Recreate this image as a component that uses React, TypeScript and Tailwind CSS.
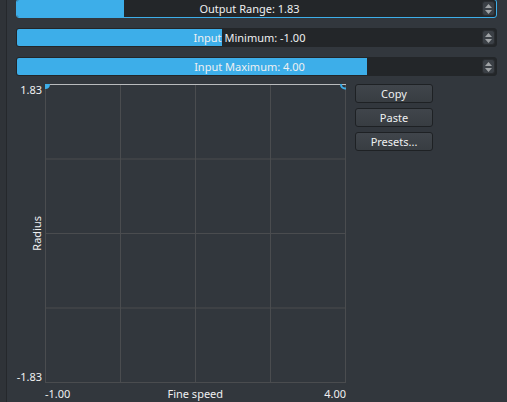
import React from "react";

type SliderProps = { label: string; fill: number; focused?: boolean };

function Spinner() {
  return (
    <div className="my-[1px] mr-[1px] w-[13px] rounded-[3px] border border-[#2a2d31] bg-[#3b4046] flex flex-col items-center justify-center gap-[2px]">
      <svg width="7" height="4" viewBox="0 0 7 4">
        <path d="M0 4 L3.5 0 L7 4 Z" fill="#a0a3a6" />
      </svg>
      <svg width="7" height="4" viewBox="0 0 7 4">
        <path d="M0 0 L3.5 4 L7 0 Z" fill="#a0a3a6" />
      </svg>
    </div>
  );
}

function Slider({ label, fill, focused }: SliderProps) {
  return (
    <div
      className={
        focused
          ? "h-[19px] flex rounded-[3px] border border-[#3daee9] bg-[#232629]"
          : "h-[19px] flex rounded-[3px] border border-[#232629] bg-[#232629]"
      }
    >
      <div className="relative flex-1 overflow-hidden rounded-l-[2px]">
        <div className="absolute inset-y-0 left-0 bg-[#3daee9]" style={{ width: fill }} />
        <div className="relative h-full flex items-center justify-center text-[11px] leading-none text-[#eff0f1]">
          {label}
        </div>
      </div>
      <Spinner />
    </div>
  );
}

function Btn({ children }: { children: React.ReactNode }) {
  return (
    <button className="h-[19px] w-[78px] rounded-[3px] border border-[#1e2124] bg-gradient-to-b from-[#40454b] to-[#383d42] text-[11px] leading-none text-[#eff0f1]">
      {children}
    </button>
  );
}

function Plot() {
  const xs = [0.5, 75.5, 150.5, 225.5, 300.5];
  const ys = [0.5, 75, 149.5, 224, 298.5];
  return (
    <svg width="301" height="299" viewBox="0 0 301 299" className="block">
      <defs>
        <clipPath id="plotclip">
          <rect x="0" y="0" width="301" height="299" />
        </clipPath>
      </defs>
      {xs.map((x) => (
        <line key={"x" + x} x1={x} y1={0} x2={x} y2={299} stroke="#4a4c4f" strokeWidth="1" />
      ))}
      {ys.map((y) => (
        <line key={"y" + y} x1={0} y1={y} x2={301} y2={y} stroke="#4a4c4f" strokeWidth="1" />
      ))}
      <g clipPath="url(#plotclip)">
        <line x1={0} y1={0.5} x2={301} y2={0.5} stroke="#b9bbbd" strokeWidth="1" />
        <circle cx="0.5" cy="0.5" r="4.5" fill="#3daee9" />
        <circle cx="300" cy="0.5" r="4" fill="none" stroke="#3daee9" strokeWidth="2" />
      </g>
    </svg>
  );
}

export default function App() {
  return (
    <div className="w-[507px] h-[402px] overflow-hidden flex bg-[#32373d] font-['Noto_Sans',sans-serif] text-[#eff0f1]">
      <div className="w-[7px] h-full border-r border-[#25282c] bg-[#2f3338]" />
      <div className="flex-1 flex flex-col">
        <div className="mt-[-1px] pl-[9px] pr-[10px] flex flex-col gap-[10px]">
          <Slider label="Output Range: 1.83" fill={107} focused />
          <Slider label="Input Minimum: -1.00" fill={205} />
          <Slider label="Input Maximum: 4.00" fill={350} />
        </div>
        <div className="mt-[8px] flex">
          <div className="flex flex-col">
            <div className="flex">
              <div className="w-[35px] mt-[-1px] h-[301px] flex flex-col items-end justify-between text-[11px] leading-[14px]">
                <span>1.83</span>
                <span className="mr-[-2px] [writing-mode:vertical-rl] rotate-180">Radius</span>
                <span>-1.83</span>
              </div>
              <div className="ml-[3px]">
                <Plot />
              </div>
            </div>
            <div className="ml-[38px] w-[301px] mt-[3px] flex justify-between text-[11px] leading-[14px]">
              <span>-1.00</span>
              <span className="mr-[4px]">Fine speed</span>
              <span>4.00</span>
            </div>
          </div>
          <div className="ml-[9px] flex flex-col gap-[5px]">
            <Btn>Copy</Btn>
            <Btn>Paste</Btn>
            <Btn>Presets...</Btn>
          </div>
        </div>
      </div>
    </div>
  );
}
